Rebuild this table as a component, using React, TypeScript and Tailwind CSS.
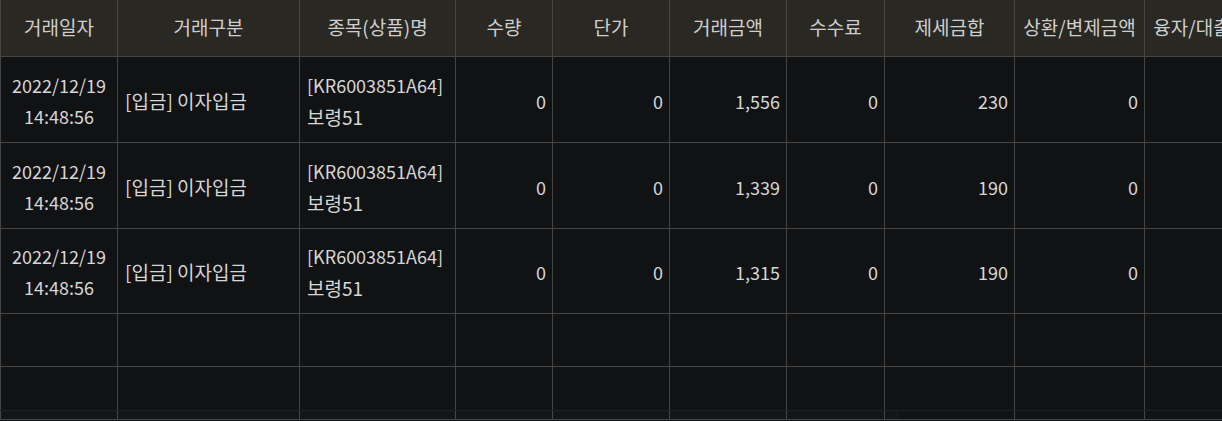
import React from "react";

const cols = [
  { label: "거래일자", w: "w-[117px]" },
  { label: "거래구분", w: "w-[182px]" },
  { label: "종목(상품)명", w: "w-[156px]" },
  { label: "수량", w: "w-[97px]" },
  { label: "단가", w: "w-[117px]" },
  { label: "거래금액", w: "w-[117px]" },
  { label: "수수료", w: "w-[98px]" },
  { label: "제세금합", w: "w-[130px]" },
  { label: "상환/변제금액", w: "w-[130px]" },
  { label: "융자/대출금액", w: "w-[130px]" },
];

const rows = [
  { amt: "1,556", tax: "230", h: "h-[86px]" },
  { amt: "1,339", tax: "190", h: "h-[86px]" },
  { amt: "1,315", tax: "190", h: "h-[85px]" },
];

const cell = "shrink-0 border-r border-b border-[#454545] box-border";

export default function App() {
  return (
    <div
      className="relative w-[1222px] h-[421px] overflow-hidden bg-[#111214] text-[#d6d6d6]"
      style={{ fontFamily: '"Noto Sans CJK KR", "Noto Sans", sans-serif' }}
    >
      <div className="w-max border-l border-[#454545]">
        {/* header */}
        <div className="flex h-[57px] bg-[#2a2823] text-[#cfcfcf] text-[19px]">
          {cols.map((c) => (
            <div
              key={c.label}
              className={`${cell} ${c.w} flex items-center justify-center whitespace-nowrap overflow-hidden`}
            >
              <span className="-mt-[1px]">{c.label}</span>
            </div>
          ))}
        </div>
        {/* data rows */}
        {rows.map((r, i) => (
          <div key={i} className={`flex ${r.h} text-[18px]`}>
            <div className={`${cell} w-[117px] flex flex-col items-center justify-center leading-[31px] pt-[2px]`}>
              <span>2022/12/19</span>
              <span>14:48:56</span>
            </div>
            <div className={`${cell} w-[182px] flex items-center px-[7px] pt-[3px] text-[19px]`}>
              [입금] 이자입금
            </div>
            <div className={`${cell} w-[156px] flex flex-col justify-center px-[7px] leading-[31px] pt-[2px]`}>
              <span>[KR6003851A64]</span>
              <span className="text-[19px]">보령51</span>
            </div>
            <div className={`${cell} w-[97px] flex items-center justify-end pr-[6px] pt-[3px]`}>0</div>
            <div className={`${cell} w-[117px] flex items-center justify-end pr-[6px] pt-[3px]`}>0</div>
            <div className={`${cell} w-[117px] flex items-center justify-end pr-[6px] pt-[3px]`}>{r.amt}</div>
            <div className={`${cell} w-[98px] flex items-center justify-end pr-[6px] pt-[3px]`}>0</div>
            <div className={`${cell} w-[130px] flex items-center justify-end pr-[6px] pt-[3px]`}>{r.tax}</div>
            <div className={`${cell} w-[130px] flex items-center justify-end pr-[6px] pt-[3px]`}>0</div>
            <div className={`${cell} w-[130px]`}></div>
          </div>
        ))}
        {[0, 1].map((i) => (
          <div key={`e${i}`} className="flex h-[53px]">
            {cols.map((c) => (
              <div key={c.label} className={`${cell} ${c.w}`}></div>
            ))}
          </div>
        ))}
      </div>
      {/* horizontal scrollbar overlay */}
      <div className="absolute left-0 right-0 top-[410px] h-[9px] border-t border-[#1f2022]">
        <div className="h-full w-[898px] rounded-r-[4px] bg-white/[0.015] border-r border-[#202124]"></div>
      </div>
    </div>
  );
}
